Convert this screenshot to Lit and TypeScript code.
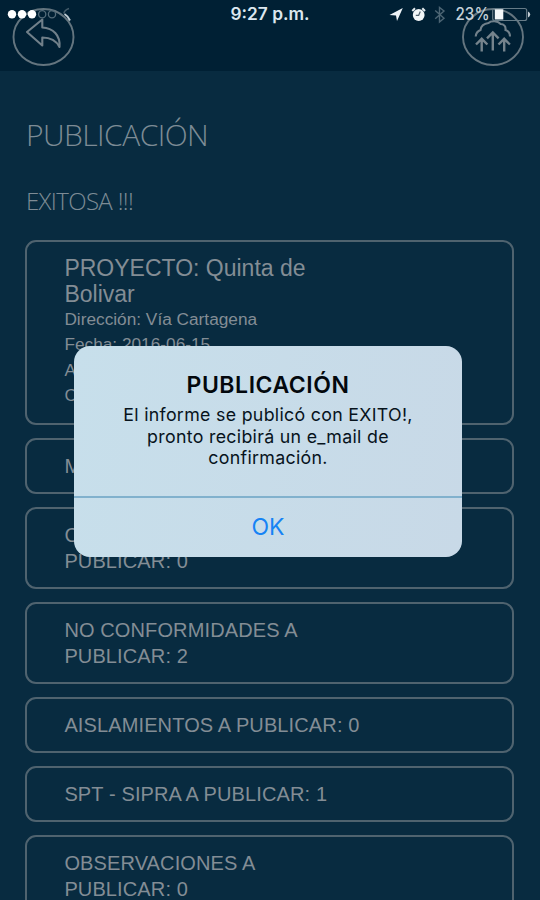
import { LitElement, html, css } from "lit";
import { customElement } from "lit/decorators.js";

@customElement("app-header")
class AppHeader extends LitElement {
  static styles = css`
    :host { display: block; height: 71px; background: #002034; }
    svg { display: block; }
    .time { font: 600 17px Inter, "Liberation Sans", sans-serif; fill: #dce7ef; }
    .pct { font: 500 17px Inter, "Liberation Sans", sans-serif; fill: #c6d2da; }
    .line { fill: none; stroke: #64757f; stroke-width: 1.9; }
    .glyph { fill: none; stroke: #71808a; stroke-width: 2.1; }
    .arrows { fill: none; stroke: #75838c; stroke-width: 2.4; }
  `;
  render() {
    return html`<svg width="540" height="71" viewBox="0 0 540 71">
      <ellipse class="line" cx="43.5" cy="37" rx="30" ry="28"></ellipse>
      <path class="glyph" stroke-linejoin="round" d="M27 32 L42.3 19.5 V27.5 C53 28 60.5 35 59.5 47 C56 40 51 37.5 42.3 37.5 V45.5 Z"></path>
      <circle cx="12" cy="14.3" r="4.2" fill="#fff"></circle>
      <circle cx="22" cy="14.3" r="4.2" fill="#fff"></circle>
      <circle cx="32" cy="14.3" r="4.2" fill="#fff"></circle>
      <circle cx="42.2" cy="14.3" r="3.6" fill="none" stroke="#536b79" stroke-width="1.3"></circle>
      <circle cx="52" cy="14.3" r="3.6" fill="none" stroke="#536b79" stroke-width="1.3"></circle>
      <path d="M69 8.5 Q64.5 10 63.8 13.5" fill="none" stroke="#435b69" stroke-width="1.4"></path>
      <path d="M64.5 14 Q68 16 70 20.5" fill="none" stroke="#c2ced5" stroke-width="1.9"></path>
      <text class="time" x="230.5" y="20.3" textLength="79" lengthAdjust="spacingAndGlyphs">9:27 p.m.</text>
      <path d="M402.8 8 L389.5 15 L396 15.4 L397 21 Z" fill="#edf3f7"></path>
      <circle cx="418.7" cy="15" r="5.9" fill="#f2f6f8"></circle>
      <path d="M412.3 11 L415 8.3 M422.3 8.3 L425 11" stroke="#e2e9ed" stroke-width="2"></path>
      <path d="M420.3 11.5 L418.7 15.3 H415.8" fill="none" stroke="#53646f" stroke-width="1.2"></path>
      <path d="M435.2 10.5 L444 18.3 L439.5 22 V7.5 L444 11 L435.2 18.8" fill="none" stroke="#4c6574" stroke-width="1.4"></path>
      <ellipse class="line" cx="493" cy="37" rx="30" ry="28"></ellipse>
      <path class="glyph" d="M475.7 36.5 C476 32 478 31 480.5 30 C481 25.5 485 23.5 488.5 23 C491 20.5 498 20.5 500.5 24 C504 24 506 26.5 505.5 30 C508.5 31 510 33 510 36.5"></path>
      <path class="arrows" d="M481.7 51.5 V40 M476 44.5 L481.7 38.8 L487.4 44.5 M492.8 50.5 V34 M487 38.3 L492.8 32.5 L498.6 38.3 M504.2 51.5 V40 M498.5 44.5 L504.2 38.8 L509.9 44.5"></path>
      <text class="pct" x="455.5" y="20.3" textLength="34" lengthAdjust="spacingAndGlyphs">23%</text>
      <rect x="492.7" y="8.5" width="34" height="12" rx="2" fill="none" stroke="#667b87" stroke-width="1.2"></rect>
      <rect x="494.8" y="9.3" width="8.5" height="10.2" fill="#f3f6f8"></rect>
      <path d="M528 11.5 Q530.2 12.5 530.2 14.5 T528 17.5 Z" fill="#c4d0d7"></path>
    </svg>`;
  }
}

@customElement("publish-alert")
class PublishAlert extends LitElement {
  static styles = css`
    :host {
      display: flex; flex-direction: column; box-sizing: border-box;
      width: 388px; height: 211px; border-radius: 16px; overflow: hidden;
      background: linear-gradient(100deg, #c7dfeb, #c8d9e7);
      color: #07131c; text-align: center;
      font-family: Inter, "Liberation Sans", sans-serif;
    }
    .message { flex: 1; padding-top: 26px; }
    .title { font-size: 23px; font-weight: 600; line-height: 27px; letter-spacing: 0.55px; color: #03080d; }
    .text { font-size: 17.8px; line-height: 21.6px; letter-spacing: 0.3px; margin-top: 5.5px; }
    .ok { height: 59px; border-top: 2px solid #81b1cd; font-size: 23px; line-height: 58px; color: #1683f5; }
  `;
  render() {
    return html`
      <div class="message">
        <div class="title">PUBLICACIÓN</div>
        <div class="text">El informe se publicó con EXITO!,<br>pronto recibirá un e_mail de<br>confirmación.</div>
      </div>
      <div class="ok">OK</div>`;
  }
}

const counters = [
  ["MEDICIONES A PUBLICAR: 0"],
  ["CONFORMIDADES A", "PUBLICAR: 0"],
  ["NO CONFORMIDADES A", "PUBLICAR: 2"],
  ["AISLAMIENTOS A PUBLICAR: 0"],
  ["SPT - SIPRA A PUBLICAR: 1"],
  ["OBSERVACIONES A", "PUBLICAR: 0"],
];

@customElement("app-root")
class AppRoot extends LitElement {
  static styles = css`
    :host {
      display: block; position: relative; width: 540px; height: 900px; overflow: hidden;
      background: #082b40; color: #838d95;
      font-family: "Liberation Sans", Arial, sans-serif;
    }
    h1, h2 { margin: 0; font-family: "Open Sans", sans-serif; font-weight: 300; color: #7d8b95; padding-left: 26px; }
    h1 { font-size: 30px; line-height: 40px; letter-spacing: -0.55px; margin-top: 44px; }
    h2 { font-size: 24px; line-height: 32px; letter-spacing: -0.65px; margin-top: 30px; }
    .list { display: flex; flex-direction: column; gap: 13px; padding: 0 26px 0 25px; margin-top: 23px; }
    .card {
      box-sizing: border-box; border: 2px solid #4f636f; border-radius: 11px; letter-spacing: 0.12px;
      padding: 13px 0 13px 37.4px; font-size: 20px; line-height: 26px; white-space: nowrap;
    }
    .project { height: 185px; font-size: 17.25px; line-height: 25.3px; letter-spacing: 0; }
    .name { font-size: 23px; line-height: 26px; }
    .overlay { position: absolute; left: 74px; top: 345.5px; }
  `;
  render() {
    return html`
      <app-header></app-header>
      <h1>PUBLICACIÓN</h1>
      <h2>EXITOSA !!!</h2>
      <div class="list">
        <div class="card project">
          <div class="name">PROYECTO: Quinta de<br>Bolivar</div>
          <div>Dirección: Vía Cartagena</div>
          <div>Fecha: 2016-06-15</div>
          <div>A</div>
          <div>C</div>
        </div>
        ${counters.map((lines) => html`<div class="card">${lines.map((l) => html`<div>${l}</div>`)}</div>`)}
      </div>
      <publish-alert class="overlay"></publish-alert>`;
  }
}
